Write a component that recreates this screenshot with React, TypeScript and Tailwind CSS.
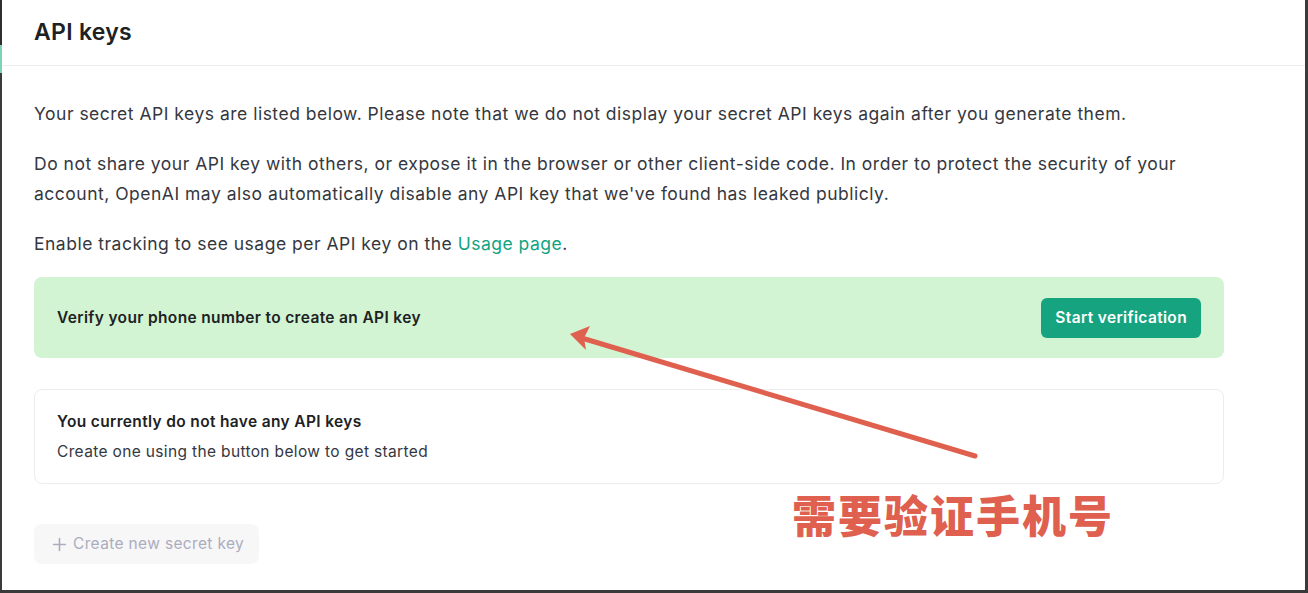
export default function App() {
  return (
    <div className="relative flex h-[593px] w-[1308px] flex-col overflow-hidden bg-[#3a3a3a] font-['Inter',sans-serif]">
      <div className="flex min-h-0 flex-1">
        <div className="flex w-[2px] flex-col">
          <div className="h-[45px] bg-[#2e2e2e]" />
          <div className="h-[28px] bg-[#7fd3b4]" />
          <div className="flex-1 bg-[#3a3a3a]" />
        </div>
        <div className="flex min-w-0 flex-1 flex-col bg-white">
          <div className="flex h-[66px] shrink-0 items-center border-b border-[#ececf1] px-[32px]">
            <h1 className="text-[23px] font-semibold tracking-[0.3px] text-[#202123]">API keys</h1>
          </div>
          <div className="flex flex-col px-[32px] pt-[33px] text-[17.5px] leading-[30px] tracking-[0.5px] text-[#353740]">
            <p>
              Your secret API keys are listed below. Please note that we do not display your secret API keys again after
              you generate them.
            </p>
            <p className="mt-[20px] w-[1150px]">
              Do not share your API key with others, or expose it in the browser or other client-side code. In order to
              protect the security of your account, OpenAI may also automatically disable any API key that we've found
              has leaked publicly.
            </p>
            <p className="mt-[20px]">
              Enable tracking to see usage per API key on the{' '}
              <span className="text-[#10a37f]">Usage page</span>.
            </p>

            <div className="mt-[18px] flex h-[81px] w-[1190px] items-center justify-between rounded-[8px] bg-[#d2f4d3] pl-[23px] pr-[23px]">
              <span className="text-[15.5px] font-semibold tracking-[0.35px] text-[#202123]">
                Verify your phone number to create an API key
              </span>
              <button className="h-[40px] rounded-[6px] bg-[#16a37f] px-[14px] text-[15.5px] font-semibold tracking-[0.35px] text-white">
                Start verification
              </button>
            </div>

            <div className="mt-[31px] flex h-[95px] w-[1190px] flex-col justify-center rounded-[8px] border border-[#ececf1] px-[22px]">
              <span className="text-[15.5px] font-semibold leading-[30px] tracking-[0.35px] text-[#202123]">
                You currently do not have any API keys
              </span>
              <span className="text-[15.5px] leading-[30px] tracking-[0.35px] text-[#353740]">
                Create one using the button below to get started
              </span>
            </div>

            <div className="mt-[40px]">
              <button className="flex h-[40px] items-center gap-[6px] rounded-[8px] bg-[#f7f7f8] pl-[18px] pr-[15px] text-[15.5px] tracking-[0.35px] text-[#acacbe]">
                <svg width="15" height="15" viewBox="0 0 14 14" fill="none" stroke="currentColor" strokeWidth="1.5" strokeLinecap="round">
                  <path d="M7 1.5v11M1.5 7h11" />
                </svg>
                Create new secret key
              </button>
            </div>
          </div>
        </div>
        <div className="w-[3px] bg-[#3a3a3a]" />
      </div>
      <div className="h-[3px] shrink-0 bg-[#3a3a3a]" />

      <svg className="pointer-events-none absolute left-0 top-0" width="1308" height="593">
        <line x1="975" y1="456" x2="585" y2="339" stroke="#e0604f" strokeWidth="5" strokeLinecap="round" />
        <path d="M570 334 L590 326 L584 338 L586 350 Z" fill="#e0604f" />
      </svg>
      <div className="pointer-events-none absolute left-[792px] top-[490px] font-['Noto_Sans_CJK_SC',sans-serif] text-[44px] font-black leading-[48px] tracking-[2px] text-[#e0604f]">
        需要验证手机号
      </div>
    </div>
  )
}
